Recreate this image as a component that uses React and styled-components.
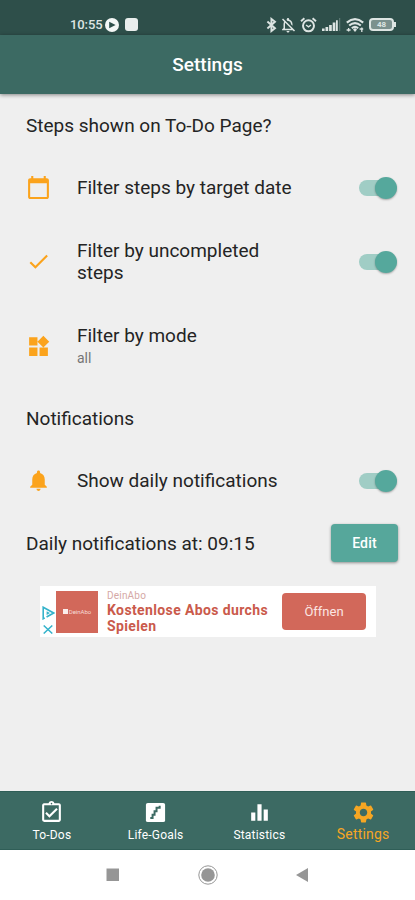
import React, { useState } from "react";
import styled, { createGlobalStyle } from "styled-components";
import {
  MdCalendarToday,
  MdCheck,
  MdEqualizer,
  MdNotifications,
  MdOutlineAssignmentTurnedIn,
  MdOutlineNotificationsOff,
  MdSettings,
  MdWidgets,
} from "react-icons/md";

function StairsIcon({ size }) {
  return (
    <svg width={size} height={size} viewBox="0 0 24 24">
      <rect x="2.8" y="2.8" width="18.4" height="18.4" rx="1.8" fill="#ffffff" />
      <path
        d="M7 17.2h2.2v-3h1.9v-3.4h1.9V7.4h3V5.6"
        fill="none"
        stroke="#3c6a63"
        strokeWidth="1.9"
      />
    </svg>
  );
}

const tabs = [
  { id: 1, name: "To-Dos", icon: MdOutlineAssignmentTurnedIn },
  { id: 2, name: "Life-Goals", icon: StairsIcon },
  { id: 3, name: "Statistics", icon: MdEqualizer },
  { id: 4, name: "Settings", icon: MdSettings },
];

function StatusBar() {
  return (
    <StatusWrapper>
      <StatusLeft>
        <Clock>10:55</Clock>
        <svg width="14" height="14" viewBox="0 0 14 14">
          <circle cx="7" cy="7" r="7" fill="#f4f7f6" />
          <path d="M4.2 3.8 10.6 7 4.2 10.2Z" fill="#2e4f4a" />
        </svg>
        <RecordSquare />
      </StatusLeft>
      <StatusRight>
        <svg width="11" height="16" viewBox="0 0 11 15">
          <path
            d="M1.4 4 9 10.8 5.4 13.6V1.4L9 4.2 1.4 11"
            fill="none"
            stroke="currentColor"
            strokeWidth="1.9"
          />
        </svg>
        <MdOutlineNotificationsOff size={18} />
        <svg width="17" height="16" viewBox="0 0 17 16">
          <g fill="none" stroke="currentColor">
            <circle cx="8.5" cy="8.8" r="5.5" strokeWidth="2" />
            <path d="M6 8l2.5 1.8L11 8" strokeWidth="1.4" />
            <path d="M1 4.2 4.4 1.2M16 4.2 12.6 1.2" strokeWidth="1.9" />
          </g>
        </svg>
        <svg width="19" height="13" viewBox="0 0 19 13">
          <path
            d="M0 10.5h2.6V13H0ZM3.5 9h2.7v4H3.5ZM7.1 7h2.7v6H7.1ZM10.7 4.5h2.7V13h-2.7ZM14 2.2h1.8V13H14Z"
            fill="currentColor"
          />
          <path d="M17.2 0h1v13h-1Z" fill="#68817d" />
        </svg>
        <svg width="18" height="14" viewBox="0 0 18 14">
          <g fill="none" stroke="currentColor" strokeWidth="2.1">
            <path d="M.8 4.6Q9-2.2 17.2 4.6" />
            <path d="M3.2 7.5q5.8-4.8 11.6 0" />
            <path d="M5.8 10.2q3.2-2.6 6.4 0" />
          </g>
          <path d="M7 11.6 9 10l2 1.6L9 14Z" fill="currentColor" />
          <path
            d="M.6 12h4M2.6 10v3.6M13.6 11h3.6M15.8 9.5V14"
            stroke="currentColor"
            strokeWidth="1.3"
          />
        </svg>
        <Battery>48</Battery>
      </StatusRight>
    </StatusWrapper>
  );
}

function Toggle({ checked, onClick }) {
  return (
    <Track role="switch" aria-checked={checked} $on={checked} onClick={onClick}>
      <Thumb $on={checked} />
    </Track>
  );
}

function App() {
  const [filters, setFilters] = useState({
    date: true,
    uncompleted: true,
    daily: true,
  });
  const [activeTab, setActiveTab] = useState(4);

  const handleToggle = (key) => {
    setFilters({ ...filters, [key]: !filters[key] });
  };

  return (
    <Wrapper>
      <GlobalStyle />
      <StatusBar />
      <Header>Settings</Header>
      <Main>
        <SectionTitle>Steps shown on To-Do Page?</SectionTitle>
        <Row $height={62}>
          <RowIcon>
            <MdCalendarToday size={25} />
          </RowIcon>
          <RowText>Filter steps by target date</RowText>
          <Toggle checked={filters.date} onClick={() => handleToggle("date")} />
        </Row>
        <Row $height={86}>
          <RowIcon>
            <MdCheck size={25} />
          </RowIcon>
          <RowText>Filter by uncompleted steps</RowText>
          <Toggle
            checked={filters.uncompleted}
            onClick={() => handleToggle("uncompleted")}
          />
        </Row>
        <Row $height={83}>
          <RowIcon>
            <MdWidgets size={25} />
          </RowIcon>
          <RowText>
            Filter by mode
            <SubText>all</SubText>
          </RowText>
        </Row>
        <SectionTitle>Notifications</SectionTitle>
        <Row $height={62}>
          <RowIcon>
            <MdNotifications size={25} />
          </RowIcon>
          <RowText>Show daily notifications</RowText>
          <Toggle
            checked={filters.daily}
            onClick={() => handleToggle("daily")}
          />
        </Row>
        <TimeRow>
          <span>Daily notifications at: 09:15</span>
          <EditBtn>Edit</EditBtn>
        </TimeRow>
        <Ad>
          <AdMarks>
            <svg width="13" height="14" viewBox="0 0 13 14">
              <path
                d="M1.2 1.2 11.6 7 1.2 12.8Z"
                fill="none"
                stroke="#35b3cb"
                strokeWidth="1.6"
                strokeDasharray="20 2"
              />
              <path d="M4.6 5.2 8 7 4.6 8.9Z" fill="#35b3cb" />
            </svg>
            <svg width="10" height="9" viewBox="0 0 10 9">
              <path
                d="M.7.5 9.3 8.5M9.3.5.7 8.5"
                stroke="#35b3cb"
                strokeWidth="1.5"
              />
            </svg>
          </AdMarks>
          <AdLogo>
            <AdLogoMark />
            DeinAbo
          </AdLogo>
          <AdText>
            <AdBrand>DeinAbo</AdBrand>
            <AdTitle>Kostenlose Abos durchs Spielen</AdTitle>
          </AdText>
          <AdBtn>Öffnen</AdBtn>
        </Ad>
      </Main>
      <TabBar>
        {tabs.map((tab) => (
          <Tab
            key={tab.id}
            $active={tab.id === activeTab}
            onClick={() => setActiveTab(tab.id)}
          >
            <tab.icon size={25} />
            <TabName $active={tab.id === activeTab}>{tab.name}</TabName>
          </Tab>
        ))}
      </TabBar>
      <SystemNav>
        <svg width="14" height="14" viewBox="0 0 14 14">
          <path d="M.5.5h12.5v12.5H.5Z" fill="#969696" />
        </svg>
        <svg width="20" height="20" viewBox="0 0 20 20">
          <circle cx="10" cy="10" r="9.2" fill="none" stroke="#969696" />
          <circle cx="10" cy="10" r="6.8" fill="#969696" />
        </svg>
        <svg width="14" height="14" viewBox="0 0 14 14">
          <path d="M12 0v14L0 7Z" fill="#969696" />
        </svg>
      </SystemNav>
    </Wrapper>
  );
}

export default App;

const GlobalStyle = createGlobalStyle`
  * {
    box-sizing: border-box;
  }

  body {
    margin: 0;
    font-family: Roboto, "Liberation Sans", sans-serif;
  }

  button {
    font-family: inherit;
    border: none;
    padding: 0;
    cursor: pointer;
  }

  svg {
    display: block;
    flex-shrink: 0;
  }
`;

const Wrapper = styled.div`
  width: 415px;
  height: 900px;
  display: flex;
  flex-direction: column;
  background-color: #efefef;
  overflow: hidden;
`;

const StatusWrapper = styled.div`
  height: 35px;
  padding: 13px 19px 0 70px;
  display: flex;
  justify-content: space-between;
  align-items: flex-start;
  background-color: #2e4f4a;
  color: #dde5e3;
`;

const StatusLeft = styled.div`
  height: 23px;
  display: flex;
  align-items: center;
`;

const Clock = styled.div`
  width: 35px;
  font-size: 13px;
  font-weight: 500;
  letter-spacing: -0.1px;
`;

const RecordSquare = styled.div`
  width: 13px;
  height: 13px;
  margin-left: 6px;
  border-radius: 3px;
  background-color: #e9eeed;
`;

const StatusRight = styled.div`
  height: 23px;
  display: flex;
  align-items: center;
  gap: 3px;

  svg:first-of-type {
    margin-right: -1px;
  }

  svg:nth-of-type(n + 4) {
    margin-left: 2px;
  }
`;

const Battery = styled.div`
  position: relative;
  width: 25px;
  height: 13px;
  margin: 0 2px 0 2px;
  border: 2px solid #dde5e3;
  border-radius: 4px;
  background-color: #7b918e;
  font-size: 8px;
  font-weight: 700;
  line-height: 9px;
  text-align: center;

  &::after {
    content: "";
    position: absolute;
    top: 2px;
    right: -4px;
    width: 2px;
    height: 5px;
    background-color: #dde5e3;
  }
`;

const Header = styled.div`
  height: 59px;
  display: flex;
  justify-content: center;
  align-items: center;
  background-color: #3c6a63;
  box-shadow: 0 1px 4px rgba(0, 0, 0, 0.45);
  color: #ffffff;
  font-size: 19px;
  font-weight: 500;
  letter-spacing: 0.05px;
  z-index: 1;
`;

const Main = styled.div`
  flex: 1;
  padding-top: 1px;
  color: #242424;
  font-size: 19px;
`;

const SectionTitle = styled.div`
  height: 62px;
  padding: 0 0 2px 26px;
  display: flex;
  align-items: center;
`;

const Row = styled.div`
  height: ${({ $height }) => $height}px;
  padding: 0 19px 0 26px;
  display: flex;
  align-items: center;
`;

const RowIcon = styled.div`
  width: 51px;
  padding-bottom: 1px;
  color: #fba31c;
`;

const RowText = styled.div`
  width: 226px;
  margin-right: auto;
  line-height: 22px;
`;

const SubText = styled.div`
  font-size: 14px;
  color: #757575;
`;

const Track = styled.button`
  position: relative;
  width: 37px;
  height: 16px;
  border-radius: 8px;
  background-color: ${({ $on }) => ($on ? "#a0cdc5" : "#b5b5b5")};
`;

const Thumb = styled.span`
  position: absolute;
  top: -3px;
  ${({ $on }) => ($on ? "right: -1px;" : "left: -1px;")}
  width: 22px;
  height: 22px;
  border-radius: 50%;
  background-color: ${({ $on }) => ($on ? "#55a89c" : "#fafafa")};
  box-shadow: 0 1px 2px rgba(0, 0, 0, 0.3);
`;

const TimeRow = styled.div`
  height: 62px;
  padding: 0 17px 0 26px;
  display: flex;
  justify-content: space-between;
  align-items: center;
`;

const EditBtn = styled.button`
  width: 67px;
  height: 38px;
  border-radius: 4px;
  background-color: #56a79b;
  box-shadow: 0 1px 3px rgba(0, 0, 0, 0.4);
  color: #ffffff;
  font-size: 14px;
  font-weight: 500;
  letter-spacing: 0.2px;
`;

const Ad = styled.div`
  width: 336px;
  height: 51px;
  margin: 12px 0 0 40px;
  display: flex;
  align-items: center;
  background-color: #ffffff;
`;

const AdMarks = styled.div`
  width: 16px;
  padding: 16px 0 0 0;
  display: flex;
  flex-direction: column;
  align-items: center;
  gap: 5px;
`;

const AdLogo = styled.div`
  width: 42px;
  height: 42px;
  display: flex;
  justify-content: center;
  align-items: center;
  gap: 1px;
  background-color: #d2685a;
  color: #f6dcd8;
  font-size: 6px;
`;

const AdLogoMark = styled.span`
  width: 5px;
  height: 5px;
  background-color: #fbeeec;
`;

const AdText = styled.div`
  width: 176px;
  padding-left: 9px;
  color: #ca5a4b;
`;

const AdBrand = styled.div`
  color: #d5a8a5;
  font-size: 10px;
  letter-spacing: 0.2px;
  line-height: 12px;
`;

const AdTitle = styled.div`
  font-size: 14px;
  font-weight: 700;
  letter-spacing: 0.38px;
  line-height: 16px;
`;

const AdBtn = styled.button`
  width: 84px;
  height: 37px;
  margin: 0 0 1px 8px;
  border-radius: 4px;
  background-color: #d2685a;
  color: #fbe6e2;
  font-size: 13px;
`;

const TabBar = styled.div`
  height: 59px;
  display: flex;
  background-color: #3c6a63;
  border-top: 1px solid #2f5e57;
  border-bottom: 1px solid #2f5e57;
`;

const Tab = styled.div`
  flex: 1;
  padding-top: 8px;
  display: flex;
  flex-direction: column;
  align-items: center;
  color: ${({ $active }) => ($active ? "#f6a623" : "#ffffff")};
  cursor: pointer;
`;

const TabName = styled.div`
  font-size: ${({ $active }) => ($active ? "14px" : "12px")};
  letter-spacing: 0.2px;
  line-height: ${({ $active }) => ($active ? "18px" : "20px")};
`;

const SystemNav = styled.div`
  height: 50px;
  display: flex;
  justify-content: center;
  align-items: center;
  gap: 78px;
  background-color: #ffffff;
`;
